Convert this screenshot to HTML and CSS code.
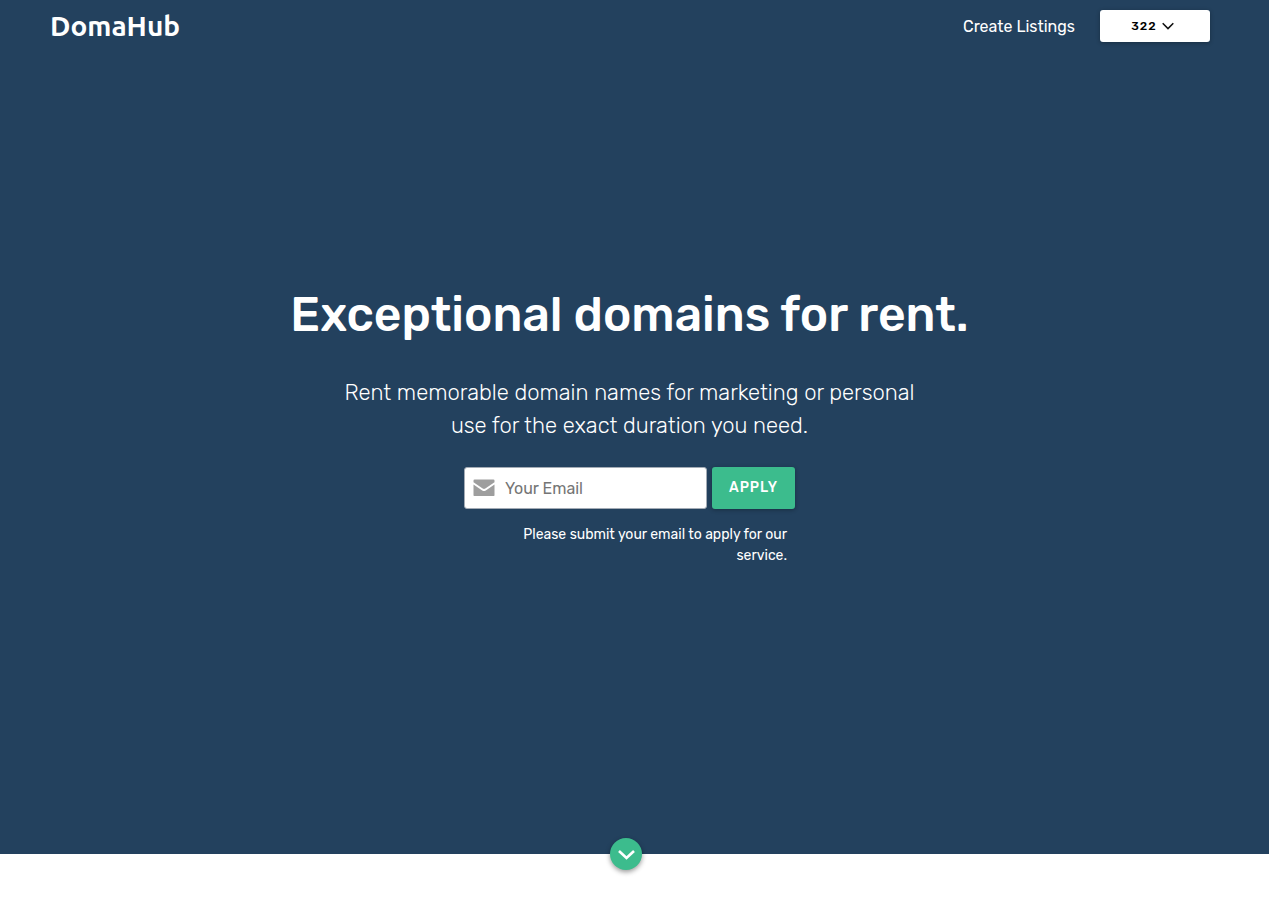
FILE: index.html
```html
<!DOCTYPE html>
<html lang="en">
<head>
<meta charset="utf-8">
<meta name="viewport" content="width=device-width, initial-scale=1">
<title>DomaHub</title>
<link rel="stylesheet" href="styles.css">
</head>
<body>
<div class="hero">
  <header class="navbar">
    <a class="logo" href="#">DomaHub</a>
    <nav class="nav-links">
      <a class="nav-link" href="#">Create Listings</a>
      <button class="user-button" type="button">322
        <svg class="user-chevron" viewBox="0 0 12 8" aria-hidden="true"><path d="M.7 1.2 6 6.5 11.3 1.2"/></svg>
      </button>
    </nav>
  </header>
  <main class="intro">
    <h1 class="title">Exceptional domains for rent.</h1>
    <p class="subtitle">Rent memorable domain names for marketing or personal<br>use for the exact duration you need.</p>
    <form class="apply-form">
      <div class="apply-row">
        <label class="email-field">
          <svg class="mail-icon" viewBox="0 0 22 18" aria-hidden="true">
            <path d="M1.6 0.5h18.8q1.1 0 1.1 1.2v1.6L12.3 9.6q-1.3.8-2.6 0L.5 3.3V1.7Q.5.5 1.6.5z"/>
            <path d="M.5 5.5 9.2 11.5q1.8 1.1 3.6 0l8.7-6v10.4q0 1.2-1.1 1.2H1.6q-1.1 0-1.1-1.2z"/>
          </svg>
          <input class="email-input" type="email" placeholder="Your Email" aria-label="Your Email">
        </label>
        <button class="apply-button" type="submit">APPLY</button>
      </div>
      <p class="apply-note">Please submit your email to apply for our service.</p>
    </form>
  </main>
  <button class="scroll-button" type="button" aria-label="Scroll down">
    <svg class="scroll-chevron" viewBox="0 0 18 12" aria-hidden="true"><path d="M2 2 9.5 9 17 2"/></svg>
  </button>
</div>
<section class="below"></section>
</body>
</html>
```
FILE: styles.css
```css
* {
  box-sizing: border-box;
}

body {
  display: flex;
  flex-direction: column;
  min-height: 100vh;
  margin: 0;
  background: #fff;
  color: #fff;
  font-family: Rubik, Roboto, sans-serif;
  font-size: 16px;
}

button,
input {
  font-family: inherit;
}

.hero {
  position: relative;
  display: flex;
  flex: 1;
  flex-direction: column;
  background: #23415e;
}

.below {
  padding-top: 61px;
}

.navbar {
  display: flex;
  align-items: center;
  justify-content: space-between;
  height: 52px;
  padding: 0 59px 0 50px;
}

.logo {
  padding-bottom: 2px;
  color: #fff;
  font-family: Ubuntu, Lato, sans-serif;
  font-size: 28px;
  font-weight: 700;
  text-decoration: none;
}

.nav-links {
  display: flex;
  align-items: center;
  gap: 25px;
}

.nav-link {
  color: #fff;
  font-size: 16px;
  text-decoration: none;
}

.user-button {
  display: flex;
  align-items: center;
  justify-content: center;
  gap: 5px;
  width: 110px;
  height: 32px;
  padding: 0 8px 0 3px;
  border: 0;
  border-radius: 3px;
  background: #fff;
  box-shadow: 0 1px 4px rgba(0, 0, 0, 0.3);
  color: #000;
  font-size: 12px;
  font-weight: 500;
  letter-spacing: 1px;
}

.user-chevron {
  width: 12px;
  height: 8px;
  fill: none;
  stroke: #111;
  stroke-width: 1.6;
}

.intro {
  display: flex;
  flex: 1;
  flex-direction: column;
  align-items: center;
  justify-content: center;
  padding: 0 10px 56px 0;
  text-align: center;
}

.title {
  margin: 0 0 31px;
  font-size: 48px;
  font-weight: 500;
  line-height: 60px;
}

.subtitle {
  margin: 0 0 25px;
  font-size: 22px;
  font-weight: 300;
  line-height: 33px;
}

.apply-row {
  display: flex;
  gap: 5px;
}

.email-field {
  display: flex;
  align-items: center;
  gap: 10px;
  width: 243px;
  height: 42px;
  padding: 0 8px;
  border: 1px solid #a3abb5;
  border-radius: 3px;
  background: #fff;
}

.mail-icon {
  flex: none;
  width: 22px;
  height: 18px;
  fill: #9e9e9e;
}

.email-input {
  flex: 1;
  min-width: 0;
  padding: 2px 0 0;
  border: 0;
  outline: 0;
  background: transparent;
  font-size: 16px;
}

.email-input::placeholder {
  color: #757575;
}

.apply-button {
  width: 83px;
  height: 42px;
  padding: 0;
  border: 0;
  border-radius: 3px;
  background: #3cbc8d;
  box-shadow: 0 1px 4px rgba(0, 0, 0, 0.3);
  color: #fff;
  font-size: 14px;
  font-weight: 500;
  letter-spacing: 1px;
}

.apply-note {
  width: 271px;
  margin: 15px 8px 0 auto;
  font-size: 14px;
  line-height: 21px;
  text-align: right;
}

.scroll-button {
  position: absolute;
  bottom: -16px;
  left: calc(50% - 25px);
  display: flex;
  align-items: center;
  justify-content: center;
  width: 32px;
  height: 32px;
  padding: 2px 0 0;
  border: 0;
  border-radius: 50%;
  background: #3cbc8d;
  box-shadow: 0 2px 5px rgba(0, 0, 0, 0.4);
}

.scroll-chevron {
  width: 18px;
  height: 12px;
  fill: none;
  stroke: #fff;
  stroke-width: 2.6;
}
```
